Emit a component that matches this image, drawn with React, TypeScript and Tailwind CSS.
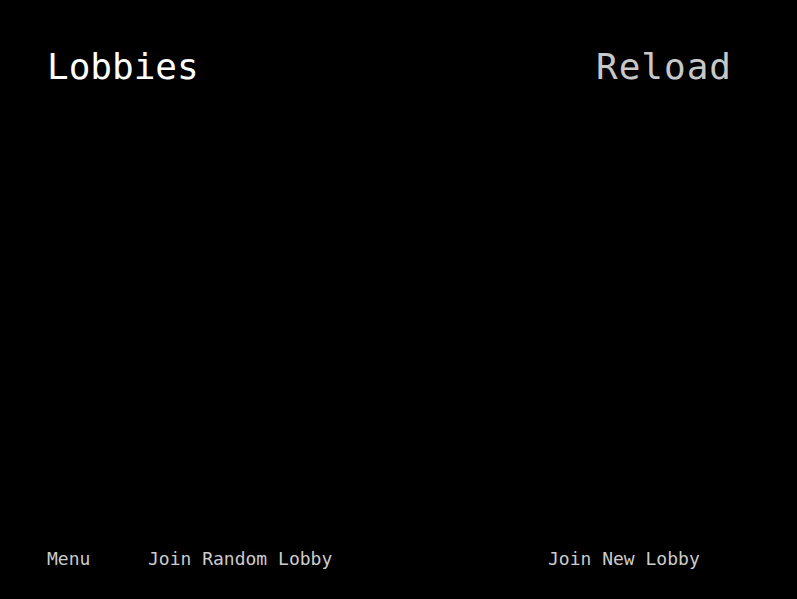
import React from "react";

const App: React.FC = () => {
  return (
    <div
      className="flex h-[599px] w-full flex-col justify-between bg-black pt-[49px] pb-[31px] pl-[47px] pr-[65px] text-[#cccccc]"
      style={{ fontFamily: '"DejaVu Sans Mono", monospace' }}
    >
      <header className="flex items-start justify-between">
        <h1 className="text-[36px] leading-none text-white">Lobbies</h1>
        <button className="text-[36px] leading-none tracking-[1px] text-[#c8c8c8]">Reload</button>
      </header>
      <nav className="flex text-[18px] leading-none">
        <button className="w-[101px] text-left">Menu</button>
        <button className="w-[400px] text-left">Join Random Lobby</button>
        <button className="text-left">Join New Lobby</button>
      </nav>
    </div>
  );
};

export default App;
